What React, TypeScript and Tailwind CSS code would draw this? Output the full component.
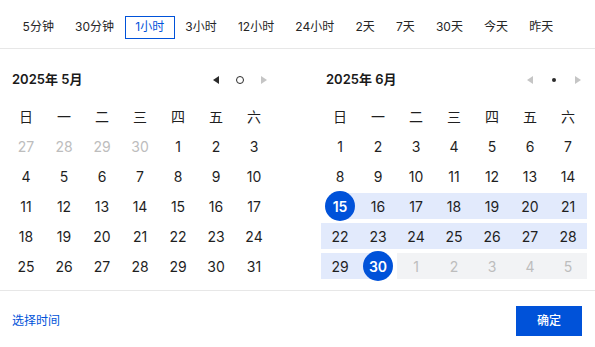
import React from "react";

const presets = ["5分钟", "30分钟", "1小时", "3小时", "12小时", "24小时", "2天", "7天", "30天", "今天", "昨天"];
const weekdays = ["日", "一", "二", "三", "四", "五", "六"];

type Day = { n: number; kind: "prev" | "cur" | "next" };

function buildMonth(startOffset: number, days: number, prevLast: number): Day[] {
  const cells: Day[] = [];
  for (let i = startOffset - 1; i >= 0; i--) cells.push({ n: prevLast - i, kind: "prev" });
  for (let d = 1; d <= days; d++) cells.push({ n: d, kind: "cur" });
  let k = 1;
  while (cells.length % 7 !== 0) cells.push({ n: k++, kind: "next" });
  return cells;
}

const may = buildMonth(4, 31, 30);
const june = buildMonth(0, 30, 31);

const RANGE_START = 15;
const RANGE_END = 30;

function TriLeft({ muted }: { muted?: boolean }) {
  return (
    <svg width="6" height="8" viewBox="0 0 6 8">
      <path d="M6 0 L0 4 L6 8 Z" fill={muted ? "#c5c5c5" : "#2b2b2b"} />
    </svg>
  );
}

function TriRight({ muted }: { muted?: boolean }) {
  return (
    <svg width="6" height="8" viewBox="0 0 6 8">
      <path d="M0 0 L6 4 L0 8 Z" fill={muted ? "#c5c5c5" : "#2b2b2b"} />
    </svg>
  );
}

function PanelHeader({ title, current }: { title: string; current: boolean }) {
  return (
    <div className="flex items-center justify-between h-[24px]">
      <span className="pl-[5px] text-[13px] font-semibold text-[#1a1a1a]">{title}</span>
      <div className="flex items-center gap-[6px]">
        <button className="w-[18px] h-[18px] flex items-center justify-center">
          <TriLeft muted={current} />
        </button>
        <button className="w-[18px] h-[18px] flex items-center justify-center">
          {current ? (
            <span className="w-[4px] h-[4px] rounded-full bg-[#2b2b2b]" />
          ) : (
            <span className="w-[8px] h-[8px] rounded-full border-[1.5px] border-[#2b2b2b]" />
          )}
        </button>
        <button className="w-[18px] h-[18px] flex items-center justify-center">
          <TriRight muted />
        </button>
      </div>
    </div>
  );
}

function MayGrid() {
  return (
    <div className="grid grid-cols-7">
      {may.map((d, i) => (
        <div
          key={i}
          className={`h-[30px] flex items-center justify-center text-[14px] ${
            d.kind === "cur" ? "text-[#1f1f1f]" : "text-[#bdbdbd]"
          }`}
        >
          {d.n}
        </div>
      ))}
    </div>
  );
}

function JuneGrid() {
  return (
    <div className="grid grid-cols-7">
      {june.map((d, i) => {
        const isCur = d.kind === "cur";
        const inRange = isCur && d.n >= RANGE_START && d.n <= RANGE_END;
        const isStart = isCur && d.n === RANGE_START;
        const isEnd = isCur && d.n === RANGE_END;
        let band = "";
        if (isStart) band = "bg-[linear-gradient(to_right,transparent_50%,#e2eafc_50%)]";
        else if (isEnd) band = "bg-[linear-gradient(to_right,#e2eafc_50%,transparent_50%)]";
        else if (inRange) band = "bg-[#e2eafc]";
        else if (d.kind === "next") band = "bg-[#f2f3f5]";
        return (
          <div key={i} className="h-[30px] flex items-center">
            <div className={`w-full h-[26px] flex items-center justify-center ${band}`}>
              {isStart || isEnd ? (
                <span className="w-[30px] h-[30px] shrink-0 rounded-full bg-[#0052d9] text-white font-semibold text-[14px] flex items-center justify-center">
                  {d.n}
                </span>
              ) : (
                <span className={`text-[14px] ${isCur ? "text-[#1f1f1f]" : "text-[#bdbdbd]"}`}>{d.n}</span>
              )}
            </div>
          </div>
        );
      })}
    </div>
  );
}

function Weekdays() {
  return (
    <div className="grid grid-cols-7">
      {weekdays.map((w) => (
        <div key={w} className="h-[30px] flex items-center justify-center text-[14px] text-[#1f1f1f]">
          {w}
        </div>
      ))}
    </div>
  );
}

export default function App() {
  return (
    <div
      className="w-[595px] h-[347px] bg-white flex flex-col overflow-hidden"
      style={{ fontFamily: 'Inter, "Noto Sans CJK SC", sans-serif' }}
    >
      {/* quick presets */}
      <div className="h-[49px] shrink-0 flex items-center pl-[12px] pt-[6px] border-b border-[#e7e7e7] text-[12px] text-[#262626]">
        {presets.map((p) => {
          const active = p === "1小时";
          return (
            <span
              key={p}
              className={`h-[23px] px-[9.6px] flex items-center border ${
                active ? "border-[#0052d9] text-[#0052d9]" : "border-transparent"
              }`}
            >
              {p}
            </span>
          );
        })}
      </div>

      {/* two month panels */}
      <div className="flex gap-[48px] pl-[7px] pr-[8px] pt-[19px] pb-[9px] border-b border-[#e7e7e7]">
        <div className="w-[266px] flex flex-col gap-[9px]">
          <PanelHeader title="2025年 5月" current={false} />
          <div>
            <Weekdays />
            <MayGrid />
          </div>
        </div>
        <div className="w-[266px] flex flex-col gap-[9px]">
          <PanelHeader title="2025年 6月" current />
          <div>
            <Weekdays />
            <JuneGrid />
          </div>
        </div>
      </div>

      {/* footer */}
      <div className="flex-1 flex items-center justify-between pl-[12px] pr-[13px] pt-[4px]">
        <span className="text-[12px] text-[#0052d9]">选择时间</span>
        <button className="w-[66px] h-[30px] bg-[#0052d9] text-white text-[12px] font-medium">确定</button>
      </div>
    </div>
  );
}
